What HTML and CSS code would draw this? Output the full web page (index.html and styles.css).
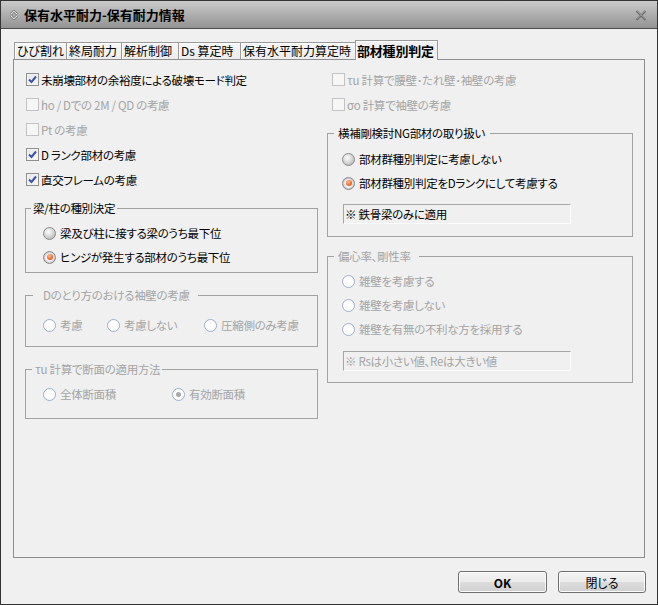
FILE: index.html
```html
<!DOCTYPE html>
<html lang="ja">
<head>
<meta charset="utf-8">
<title>保有水平耐力-保有耐力情報</title>
<link rel="stylesheet" href="styles.css">
</head>
<body>
<div class="window">
  <div class="titlebar">
    <svg class="ticon" width="8" height="10" viewBox="0 0 8 10"><path d="M1 4.2 L4 1.2 L7 4.2 M1 5.8 L4 8.8 L7 5.8" fill="none" stroke="#6a6a6a" stroke-width="2.4"/><path d="M1 4.2 L4 1.2 L7 4.2 M1 5.8 L4 8.8 L7 5.8" fill="none" stroke="#e6e6e6" stroke-width="1.1"/></svg>
    <span class="title">保有水平耐力-保有耐力情報</span>
    <svg class="close" width="12" height="11" viewBox="0 0 12 11"><path d="M1.5 1 L10.5 10 M10.5 1 L1.5 10" stroke="#6e6e6e" stroke-width="2"/><path d="M2 1 L10 9 M10 1 L2 9" stroke="#9a9a9a" stroke-width="0.8"/></svg>
  </div>
  <div class="content">
    <div class="tabs">
      <div class="tab w1">ひび割れ</div>
      <div class="tab w2">終局耐力</div>
      <div class="tab w3">解析制御</div>
      <div class="tab w4">Ds 算定時</div>
      <div class="tab w5">保有水平耐力算定時</div>
      <div class="tab active">部材種別判定</div>
    </div>
    <div class="panel">
      <div class="col col-left">
        <div class="row"><span class="cb"><svg class="chk" width="9" height="9" viewBox="0 0 9 9"><path d="M1 4.5 L3.5 7 L8 1.5" fill="none" stroke="#3d52b0" stroke-width="2"/></svg></span>未崩壊部材の余裕度による破壊モード判定</div>
        <div class="row dis"><span class="cb"></span>ho / Dでの 2M / QD の考慮</div>
        <div class="row dis"><span class="cb"></span>Pt の考慮</div>
        <div class="row"><span class="cb"><svg class="chk" width="9" height="9" viewBox="0 0 9 9"><path d="M1 4.5 L3.5 7 L8 1.5" fill="none" stroke="#3d52b0" stroke-width="2"/></svg></span>D ランク部材の考慮</div>
        <div class="row"><span class="cb"><svg class="chk" width="9" height="9" viewBox="0 0 9 9"><path d="M1 4.5 L3.5 7 L8 1.5" fill="none" stroke="#3d52b0" stroke-width="2"/></svg></span>直交フレームの考慮</div>

        <fieldset class="grp g1">
          <legend class="lg lg1">梁/柱の種別決定</legend>
          <div class="gbody gbody-l">
            <div class="rrow"><span class="rd"></span>梁及び柱に接する梁のうち最下位</div>
            <div class="rrow"><span class="rd on"></span>ヒンジが発生する部材のうち最下位</div>
          </div>
        </fieldset>

        <fieldset class="grp g2 dis">
          <legend class="lg lg2">Dのとり方のおける袖壁の考慮</legend>
          <div class="gbody gbody-l">
            <div class="rrow">
              <span class="item iw64"><span class="rd off"></span>考慮</span>
              <span class="item iw97"><span class="rd off"></span>考慮しない</span>
              <span class="item"><span class="rd off"></span>圧縮側のみ考慮</span>
            </div>
          </div>
        </fieldset>

        <fieldset class="grp g3 dis">
          <legend class="lg lg3">τu 計算で断面の適用方法</legend>
          <div class="gbody gbody-l">
            <div class="rrow">
              <span class="item iw129"><span class="rd off"></span>全体断面積</span>
              <span class="item"><span class="rd off on"></span>有効断面積</span>
            </div>
          </div>
        </fieldset>
      </div>

      <div class="col col-right">
        <div class="row dis"><span class="cb"></span>τu 計算で腰壁･たれ壁･袖壁の考慮</div>
        <div class="row dis"><span class="cb"></span>σo 計算で袖壁の考慮</div>

        <fieldset class="grp ga">
          <legend class="lg lga">横補剛検討NG部材の取り扱い</legend>
          <div class="gbody gbody-r">
            <div class="rrow"><span class="rd"></span>部材群種別判定に考慮しない</div>
            <div class="rrow"><span class="rd on"></span>部材群種別判定をDランクにして考慮する</div>
            <div class="tbox tbox-a">※ 鉄骨梁のみに適用</div>
          </div>
        </fieldset>

        <fieldset class="grp gb dis">
          <legend class="lg lgb">偏心率、剛性率</legend>
          <div class="gbody gbody-r">
            <div class="rrow"><span class="rd off"></span>雑壁を考慮する</div>
            <div class="rrow"><span class="rd off"></span>雑壁を考慮しない</div>
            <div class="rrow"><span class="rd off"></span>雑壁を有無の不利な方を採用する</div>
            <div class="tbox tbox-b">※ Rsは小さい値、Reは大きい値</div>
          </div>
        </fieldset>
      </div>
    </div>
    <div class="buttons">
      <div class="btn btn-ok">OK</div>
      <div class="btn">閉じる</div>
    </div>
  </div>
</div>
</body>
</html>
```

FILE: styles.css
```css
* { box-sizing: border-box; }
html, body { margin: 0; padding: 0; background: #f0f0f0; }
body {
  font-family: "Noto Sans CJK JP", "Liberation Sans", sans-serif;
  font-size: 12px;
  color: #000;
  font-feature-settings: "palt";
}
.window {
  width: 658px;
  height: 605px;
  border: 1px solid #333;
  background: #f0f0f0;
  display: flex;
  flex-direction: column;
}
.titlebar {
  height: 28px;
  flex: none;
  display: flex;
  align-items: center;
  padding-left: 9px;
  background: linear-gradient(#cbcbcb, #a9a9a9 60%, #939393);
  border-bottom: 1px solid #4a4a4a;
}
.ticon { display: block; margin-top: 1px; }
.title {
  margin-left: 6px;
  font-size: 13px;
  font-weight: bold;
  line-height: 16px;
  margin-top: 1px;
}
.close { margin-left: auto; margin-right: 10px; display: block; margin-top: 1px; }

.content {
  flex: 1;
  padding: 11px 12px 0 12px;
  display: flex;
  flex-direction: column;
}
.tabs {
  height: 19px;
  display: flex;
  align-items: flex-end;
  padding-left: 1px;
}
.tab {
  height: 17px;
  border: 1px solid #9a9a9a;
  border-bottom: none;
  background: linear-gradient(#f7f7f7, #ececec);
  box-shadow: inset 1px 1px 0 #fff;
  padding-left: 2px;
  line-height: 15px;
  white-space: nowrap;
}
.tab + .tab { margin-left: -1px; }
.w1 { width: 53px; }
.w2 { width: 56px; }
.w3 { width: 58px; }
.w4 { width: 63px; }
.w5 { width: 116px; }
.tab.active {
  width: 83px;
  height: 20px;
  margin-bottom: -1px;
  background: #f0f0f0;
  font-size: 13px;
  font-weight: bold;
  line-height: 16px;
  padding-top: 2px;
  padding-left: 1px;
  letter-spacing: -0.2px;
  position: relative;
  z-index: 1;
}

.panel {
  height: 499px;
  flex: none;
  border: 1px solid #8d8d8d;
  display: flex;
  gap: 9px;
  padding: 7px 11px 0 11px;
  font-size: 11.5px;
  letter-spacing: -0.3px;
}
.col { display: flex; flex-direction: column; }
.col-left { width: 293px; }
.col-right { width: 306px; }
.col-left > .row { padding-left: 1px; }
.col-right > .row { padding-left: 5px; }

.row {
  height: 25px;
  display: flex;
  align-items: center;
  white-space: nowrap;
}
.dis, .dis .rrow { color: #a4a4a4; }

.cb {
  width: 13px;
  height: 13px;
  margin-right: 2px;
  border: 1px solid #8e8f8f;
  background: linear-gradient(135deg, #e4e4e4, #fafafa);
  box-shadow: inset 0 0 0 1px #f4f4f4;
  display: flex;
  align-items: center;
  justify-content: center;
  flex: none;
}
.dis .cb {
  border-color: #c3c3c3;
  background: #f6f6f6;
  box-shadow: none;
}
.chk { display: block; }

.grp {
  margin: 0;
  padding: 0;
  border: 1px solid #a2a2a2;
  min-width: 0;
}
.lg {
  line-height: 14px;
  height: 14px;
  white-space: nowrap;
}
.lg1 { margin-left: 5px; padding: 0 2px; }
.lg2 { margin-left: 7px; padding: 0 8px 0 10px; }
.lg3 { margin-left: 6px; padding: 0 2px 0 3px; }
.lga { margin-left: 6px; padding: 0 5px 0 4px; }
.lgb { margin-left: 6px; padding: 0 8px 0 4px; }
.dis .lg { color: #a4a4a4; }

.g1 { margin-top: 9px; }
.g1 .gbody { padding-top: 6px; padding-bottom: 3px; }
.g2 { margin-top: 15px; }
.g2 .gbody { padding-top: 11px; padding-bottom: 9px; }
.g3 { margin-top: 15px; }
.g3 .gbody { padding-top: 6px; padding-bottom: 12px; }
.ga { margin-top: 9px; }
.ga .gbody { padding-bottom: 12px; padding-top: 7px; }
.gb { margin-top: 12px; }
.gb .gbody { padding-top: 6px; padding-bottom: 11px; }

.gbody-l { padding-left: 17px; }
.gbody-r { padding-left: 14px; }

.rrow {
  height: 24px;
  display: flex;
  align-items: center;
  white-space: nowrap;
}
.item { display: flex; align-items: center; }
.iw64 { width: 64px; }
.iw97 { width: 97px; }
.iw129 { width: 129px; }

.rd {
  width: 13px;
  height: 13px;
  border-radius: 50%;
  margin-right: 4px;
  flex: none;
  border: 1px solid #8b8b8b;
  background: radial-gradient(circle at 40% 35%, #fdfdfd 0%, #d9d9d9 45%, #a8a8a8 100%);
  display: flex;
  align-items: center;
  justify-content: center;
}
.rd.on {
  background: radial-gradient(circle, #f4f4f4 0%, #f4f4f4 45%, #c4c4c4 70%, #a2a2a2 100%);
}
.rd.on::after {
  content: "";
  width: 6px;
  height: 6px;
  border-radius: 50%;
  background: radial-gradient(circle at 40% 35%, #ffc29a 0%, #f26b2e 55%, #d0400f 100%);
}
.rd.off {
  border-color: #9cadcc;
  background: #fff;
}
.rd.off.on::after {
  width: 5px;
  height: 5px;
  background: #a9a9a9;
}

.tbox {
  width: 228px;
  height: 20px;
  margin-left: 1px;
  border: 1px solid #a6a6a6;
  border-right-color: #fcfcfc;
  border-bottom-color: #fcfcfc;
  display: flex;
  align-items: center;
  padding-left: 1px;
  white-space: nowrap;
}
.tbox-a { margin-top: 9px; color: #000; }
.tbox-b { margin-top: 10px; color: #a4a4a4; }

.buttons {
  display: flex;
  justify-content: flex-end;
  gap: 11px;
  margin-top: 13px;
  margin-right: -1px;
}
.btn {
  width: 88px;
  height: 22px;
  border: 1px solid #707070;
  border-radius: 3px;
  background: linear-gradient(#f3f3f3 0%, #ebebeb 50%, #dddddd 51%, #d0d0d0 100%);
  box-shadow: inset 0 0 0 1px #fbfbfb;
  display: flex;
  align-items: center;
  justify-content: center;
  font-size: 12px;
}
.btn-ok { width: 89px; font-weight: bold; }
```
